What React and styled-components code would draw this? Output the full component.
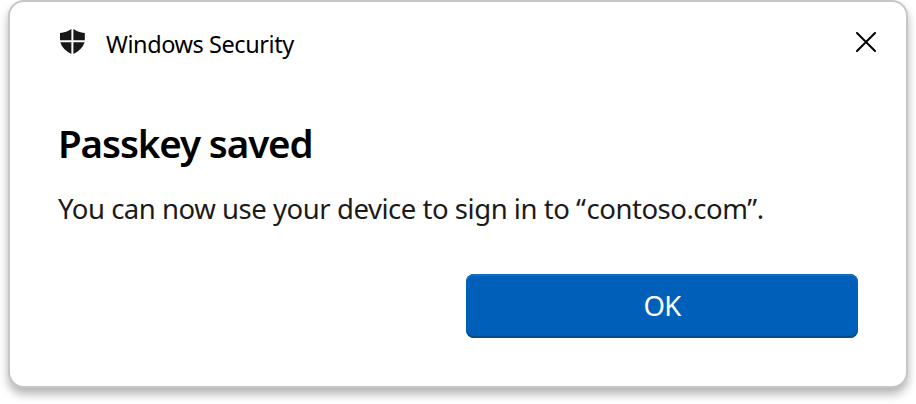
import React from "react";
import styled, { createGlobalStyle } from "styled-components";

const GlobalStyle = createGlobalStyle`
  * { box-sizing: border-box; }
  body { margin: 0; background: #fff; overflow: hidden; font-family: "Noto Sans", "Open Sans", sans-serif; }
`;

const Stage = styled.main`
  width: 916px;
  height: 404px;
  padding: 0 8px 16px;
  background: #fff;
  overflow: hidden;
`;

const Dialog = styled.section`
  display: flex;
  flex-direction: column;
  width: 900px;
  height: 388px;
  padding: 0 48px;
  border: 2px solid #c6c6c6;
  border-radius: 16px;
  background: #fff;
  box-shadow: 0 6px 10px rgba(0, 0, 0, 0.3);
`;

const TitleBar = styled.header`
  display: flex;
  align-items: center;
  height: 80px;
  margin-right: -18px;
`;

const AppName = styled.span`
  margin: 3px 0 0 20px;
  font-size: 23.5px;
  line-height: 32px;
  letter-spacing: -0.43px;
  color: #000;
`;

const CloseButton = styled.button`
  display: flex;
  margin-left: auto;
  padding: 0;
  border: 0;
  background: none;
`;

const Heading = styled.h1`
  margin: 33px 0 0;
  font-size: 38.5px;
  font-weight: 600;
  line-height: 56px;
  letter-spacing: -1.1px;
  color: #000;
  white-space: nowrap;
`;

const Message = styled.p`
  margin: 18px 0 0;
  font-size: 27.5px;
  line-height: 40px;
  letter-spacing: -0.46px;
  color: #1b1b1b;
  white-space: nowrap;
`;

const Domain = styled.span`
  margin-left: 1px;
  letter-spacing: -0.46px;
`;

const Actions = styled.footer`
  display: flex;
  justify-content: flex-end;
  margin-top: 45px;
`;

const PrimaryButton = styled.button`
  width: 392px;
  height: 64px;
  padding: 0 0 1px;
  border: 0;
  border-radius: 8px;
  background: #005fb8;
  box-shadow: inset 0 2px 0 #146cbe, inset 0 -2px 0 #064b8c;
  color: #fff;
  font-family: inherit;
  font-size: 27.5px;
  letter-spacing: -0.8px;
`;

const ShieldIcon = () => (
  <svg width="28" height="28" viewBox="0 0 28 28" fill="#181818" aria-hidden="true">
    <path d="M13.4 1v11.3H2V5Q8.5 4.5 13.4 1Z" />
    <path d="M15.4 1v11.3h11.4V5Q20.3 4.5 15.4 1Z" />
    <path d="M2.2 14.3h11.2V26Q4.4 21.5 2.2 14.3Z" />
    <path d="M26.6 14.3H15.4V26Q24.4 21.5 26.6 14.3Z" />
  </svg>
);

const CloseIcon = () => (
  <svg width="20" height="20" viewBox="0 0 20 20" stroke="#000" strokeWidth="2" strokeLinecap="round" aria-hidden="true">
    <path d="M1 1l18 18M19 1L1 19" />
  </svg>
);

export default function App() {
  return (
    <>
      <GlobalStyle />
      <Stage>
        <Dialog role="dialog" aria-labelledby="dialog-heading">
          <TitleBar>
            <ShieldIcon />
            <AppName>Windows Security</AppName>
            <CloseButton aria-label="Close"><CloseIcon /></CloseButton>
          </TitleBar>
          <Heading id="dialog-heading">Passkey saved</Heading>
          <Message>You can now use your device to sign in to “<Domain>contoso.com</Domain>”.</Message>
          <Actions><PrimaryButton>OK</PrimaryButton></Actions>
        </Dialog>
      </Stage>
    </>
  );
}
